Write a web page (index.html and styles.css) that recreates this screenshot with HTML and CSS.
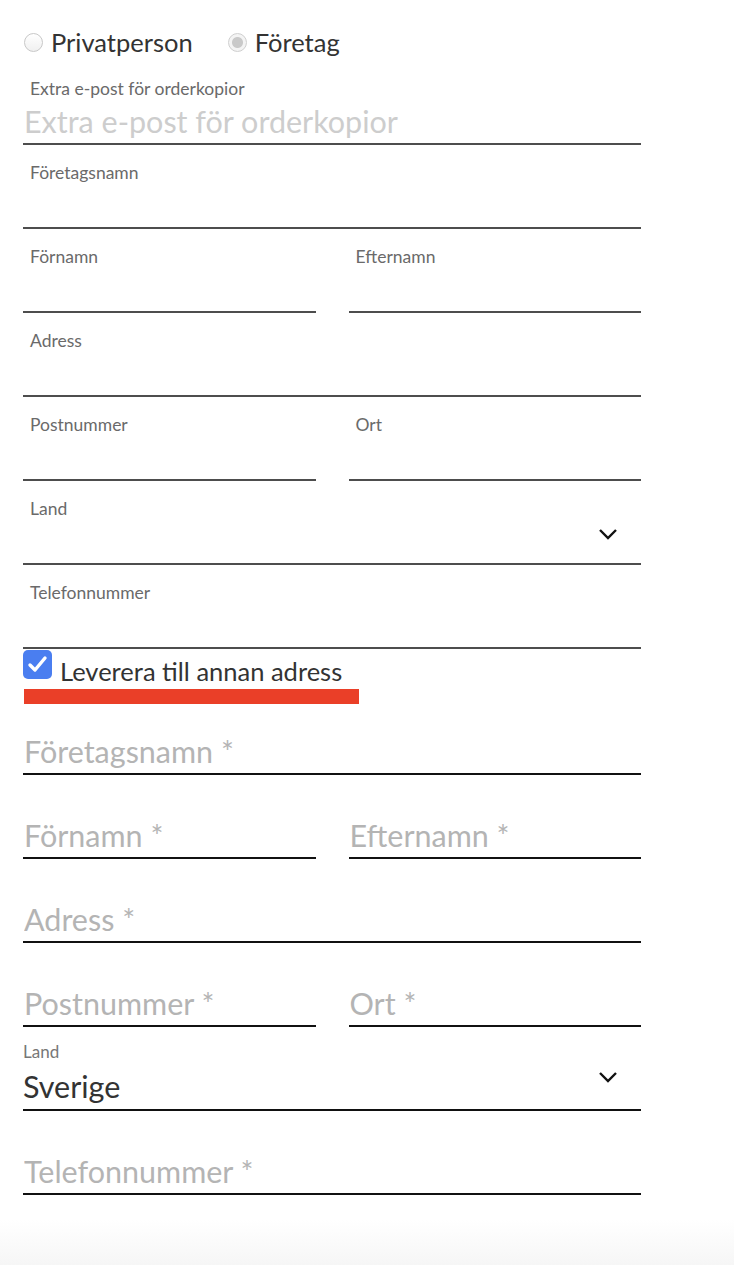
FILE: index.html
```
<!DOCTYPE html>
<html lang="sv">
  <head>
    <meta charset="utf-8"/>
    <title>Kassa: leveransuppgifter</title>
    <link rel="stylesheet" href="styles.css">
  </head>

  <body>
    <form class="checkout">
      <div class="customer-type">
        <label class="radio"><span class="radio-dot"></span>Privatperson</label>
        <label class="radio"><span class="radio-dot checked"></span>Företag</label>
      </div>

      <div class="field">
        <label for="extra-email">Extra e-post för orderkopior</label>
        <input type="email" id="extra-email" class="faint" placeholder="Extra e-post för orderkopior">
      </div>
      <div class="field">
        <label for="company">Företagsnamn</label>
        <input type="text" id="company">
      </div>
      <div class="row">
        <div class="field">
          <label for="fname">Förnamn</label>
          <input type="text" id="fname">
        </div>
        <div class="field">
          <label for="lname">Efternamn</label>
          <input type="text" id="lname">
        </div>
      </div>
      <div class="field">
        <label for="address">Adress</label>
        <input type="text" id="address">
      </div>
      <div class="row">
        <div class="field">
          <label for="zip">Postnummer</label>
          <input type="text" id="zip">
        </div>
        <div class="field">
          <label for="city">Ort</label>
          <input type="text" id="city">
        </div>
      </div>
      <div class="field">
        <label for="country">Land</label>
        <div class="select-wrap">
          <select id="country"><option></option></select>
          <svg class="chevron" width="20" height="12" viewBox="0 0 20 12"><path d="M2 2 L10 10 L18 2" fill="none" stroke="#111" stroke-width="2.4"/></svg>
        </div>
      </div>
      <div class="field">
        <label for="phone">Telefonnummer</label>
        <input type="tel" id="phone">
      </div>

      <div class="ship-other">
        <span class="checkbox">
          <svg width="29" height="29" viewBox="0 0 29 29"><path d="M7 15 L12 20 L22 8" fill="none" stroke="#fff" stroke-width="3.4" stroke-linecap="round" stroke-linejoin="round"/></svg>
        </span>
        <span class="ship-text">Leverera till annan adress</span>
        <span class="marker"></span>
      </div>

      <div class="field dark">
        <input type="text" placeholder="Företagsnamn *">
      </div>
      <div class="row">
        <div class="field dark">
          <input type="text" placeholder="Förnamn *">
        </div>
        <div class="field dark">
          <input type="text" placeholder="Efternamn *">
        </div>
      </div>
      <div class="field dark">
        <input type="text" placeholder="Adress *">
      </div>
      <div class="row">
        <div class="field dark">
          <input type="text" placeholder="Postnummer *">
        </div>
        <div class="field dark">
          <input type="text" placeholder="Ort *">
        </div>
      </div>
      <div class="field dark country">
        <label for="ship-country">Land</label>
        <div class="select-wrap">
          <select id="ship-country"><option>Sverige</option></select>
          <svg class="chevron" width="20" height="12" viewBox="0 0 20 12"><path d="M2 2 L10 10 L18 2" fill="none" stroke="#111" stroke-width="2.4"/></svg>
        </div>
      </div>
      <div class="field dark">
        <input type="tel" placeholder="Telefonnummer *">
      </div>
    </form>

    <div class="page-foot"></div>
  </body>

</html>
```

FILE: styles.css
```
body {
  background-color: #fff;
  color: #333;
  font: 16px / 1.25 Lato, "Open Sans", sans-serif;
  margin: 0;
}

* {
  box-sizing: border-box;
}

.checkout {
  width: 618px;
  margin-left: 23px;
}

/* Privatperson / Företag */
.customer-type {
  display: flex;
  gap: 34px;
  height: 61px;
  padding-top: 23px;
}

.radio {
  display: flex;
  align-items: center;
  gap: 8px;
  font-size: 25.5px;
  line-height: 30px;
  color: #333;
}

.radio-dot {
  width: 19px;
  height: 19px;
  border-radius: 50%;
  border: 1px solid #c8c8c8;
  background: linear-gradient(#fff, #f0f0f0);
  margin-left: 1px;
}

.radio-dot.checked {
  border-color: #cfcfcf;
  background: radial-gradient(circle, #c9c9c9 0 5px, #f4f4f4 6px);
}

/* Text fields */
.field {
  height: 84px;
  padding-top: 18px;
  border-bottom: 2px solid #4d4d4d;
  display: flex;
  flex-direction: column;
}

.field label {
  display: block;
  height: 20px;
  padding-left: 7px;
  font-size: 17.5px;
  line-height: 20px;
  color: #6a6a6a;
}

.field input,
.field select {
  flex: 1;
  width: 100%;
  border: 0;
  outline: none;
  padding: 0 0 0 1px;
  background: transparent;
  font: 30.5px / 44px Lato, "Open Sans", sans-serif;
  color: #333;
}

.field input::placeholder {
  color: #b4b4b4;
}

.field input.faint::placeholder {
  color: #cdcdcd;
}

.row {
  display: grid;
  grid-template-columns: 1fr 1fr;
  gap: 33px;
}

.select-wrap {
  flex: 1;
  display: flex;
  position: relative;
}

.field select {
  appearance: none;
  -webkit-appearance: none;
}

.chevron {
  position: absolute;
  right: 23px;
  top: 9px;
}

.field.dark {
  border-bottom-color: #111;
  padding-top: 38px;
}

.field.country {
  padding-top: 15px;
}

.field.country label {
  padding-left: 0;
  font-size: 17px;
  color: #777;
}

.field.country select {
  padding-left: 0;
}

.field.country .chevron {
  top: 9px;
}

/* Leverera till annan adress */
.ship-other {
  position: relative;
  display: flex;
  align-items: flex-start;
  gap: 8px;
  height: 42px;
  padding-top: 1px;
}

.checkbox {
  width: 29px;
  height: 29px;
  border-radius: 5px;
  background: #4a7ef0;
  display: block;
}

.checkbox svg {
  display: block;
}

.ship-text {
  font-size: 25.5px;
  line-height: 30px;
  margin-top: 6px;
  color: #333;
}

.marker {
  position: absolute;
  left: 1px;
  top: 40px;
  width: 335px;
  height: 15px;
  background: #ea3f28;
}

.page-foot {
  margin-top: 25px;
  height: 45px;
  background: linear-gradient(#fff, #f6f6f6);
}
```
